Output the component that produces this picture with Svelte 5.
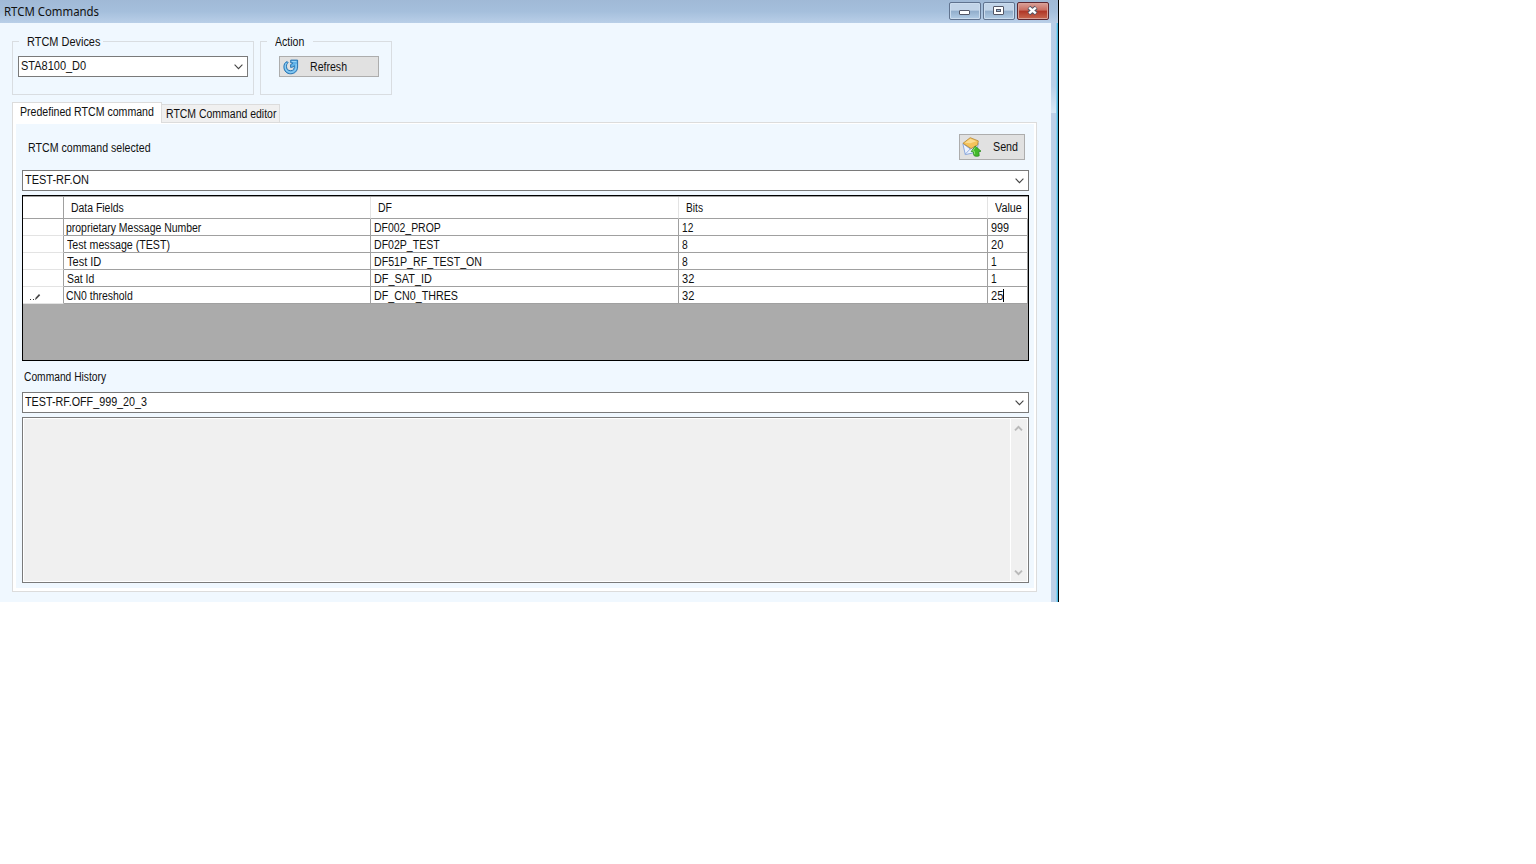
<script>
  const rows = [
    { c: [['proprietary Message Number', 135, 2], ['DF002_PROP', 67, 3], ['12', 11, 3], ['999', 18, 3]] },
    { c: [['Test message (TEST)', 103, 3], ['DF02P_TEST', 66, 3], ['8', 6, 3], ['20', 12, 3]] },
    { c: [['Test ID', 34, 3], ['DF51P_RF_TEST_ON', 108, 3], ['8', 6, 3], ['1', 6, 3]] },
    { c: [['Sat Id', 27, 3], ['DF_SAT_ID', 58, 3], ['32', 12, 3], ['1', 6, 3]] },
    { c: [['CN0 threshold', 67, 2], ['DF_CN0_THRES', 84, 3], ['32', 12, 3], ['25', 12, 3]], editing: true }
  ];
  const headers = [['Data Fields', 53], ['DF', 14], ['Bits', 17], ['Value', 27]];

  // Condense a label horizontally to its design width.
  function fit(node, width) {
    const natural = node.offsetWidth;
    node.style.transform = `scaleX(${width / natural})`;
    node.style.marginRight = `${width - natural}px`;
  }
</script>

{#snippet label(text, width)}<span class="label" use:fit={width}>{text}</span>{/snippet}

{#snippet combo(text, width)}
  <div class="combo">
    {@render label(text, width)}
    <svg class="chevron" width="9" height="6" viewBox="0 0 9 6"><path d="M.6.7 4.5 4.6 8.4.7" fill="none" stroke="#444" stroke-width="1.1" /></svg>
  </div>
{/snippet}

<div class="window">
  <header>
    <div class="title">{@render label('RTCM Commands', 95)}</div>
    <div class="controls">
      <button class="ctl" aria-label="Minimize"><svg width="32" height="18"><rect x="10.5" y="8.5" width="10" height="4" rx=".5" fill="#fff" stroke="#535666" /></svg></button>
      <button class="ctl" aria-label="Maximize"><svg width="32" height="18"><rect x="10.5" y="4.5" width="10" height="8" rx=".5" fill="#fff" stroke="#535666" /><rect x="13.5" y="7.5" width="4" height="2" fill="#9db9d6" stroke="#535666" /></svg></button>
      <button class="ctl close" aria-label="Close"><svg width="32" height="18"><path d="m11.8 5.3 7.4 6.4m0-6.4-7.4 6.4" stroke="#535666" stroke-width="4.4" /><path d="m12.2 5.6 6.6 5.8m0-5.8-6.6 5.8" stroke="#fff" stroke-width="2.4" /></svg></button>
    </div>
  </header>
  <div class="main">
    <div class="content">
      <div class="groups">
        <section class="group devices">
          <div class="legend">{@render label('RTCM Devices', 73)}</div>
          {@render combo('STA8100_D0', 65)}
        </section>
        <section class="group action">
          <div class="legend">{@render label('Action', 29)}</div>
          <button class="btn refresh">
            <svg width="16" height="16" viewBox="0 0 16 16"><path d="M4.2 2.6C1.8 3.4.8 5.4.9 8.2c.2 4 3 6.6 6.7 6.6 4.2 0 7-2.9 7-6.8V1.1H7.7v2.7l2.1.1c-.5 1-1.2 1.5-2.2 1.7v2.8c1.6.1 2.8-.6 3.7-1.7.2 3.1-1 5-3.6 5-2.8 0-4.3-1.8-4.2-4.4 0-1.9.5-2.9 1.7-3.6z" fill="#62b3e8" stroke="#1f6cac" stroke-width=".9" stroke-linejoin="round" /><path d="M3.5 4.1C1.2 6.3 1.7 13.2 7.7 13.3c4.1 0 5.9-2.9 5.4-8.3M8.8 2.5h4.5" fill="none" stroke="#9fd6f6" stroke-width=".9" /></svg>
            {@render label('Refresh', 37)}
          </button>
        </section>
      </div>
      <nav>
        <div class="tab active">{@render label('Predefined RTCM command', 134)}</div>
        <div class="tab">{@render label('RTCM Command editor', 110)}</div>
      </nav>
      <div class="panel">
        <div class="page">
          <div class="top">
            {@render label('RTCM command selected', 123)}
            <button class="btn send">
              <svg width="20" height="20" viewBox="0 0 20 20"><path d="m.8 6.5 7.8 5.7 7.7-6-1.5 9-11.5 2.4z" fill="#edf3ff" stroke="#8ca9dd" /><path d="M1 6.3 8.2.7l8.1 3.2-.7 4-6.5 3.7z" fill="#f5c35b" stroke="#b58632" stroke-width=".8" /><path d="m2.8 5.8 5.6-4 6 2.4-6 2.1z" fill="#fbdc91" /><path d="m3.2 17.2 5.3-5.5" stroke="#6e91d3" stroke-width=".7" /><path d="m13.3 9.1 5.7 5.1-2.2.5.4 4.1c-1.8.8-4.3.7-5.4-.5l-.3-3.3-2.3-.5z" fill="#43b92a" stroke="#2b8c20" stroke-width=".8" stroke-linejoin="round" /><path d="m13.2 10.4-2.5 3.5 1.6.4.4 3" fill="none" stroke="#8be570" /></svg>
              {@render label('Send', 25)}
            </button>
          </div>
          {@render combo('TEST-RF.ON', 64)}
          <div class="grid">
            <div class="row head">
              <div class="cell"></div>
              {#each headers as [text, width]}<div class="cell">{@render label(text, width)}</div>{/each}
            </div>
            {#each rows as row}
              <div class="row">
                <div class="cell mark">
                  {#if row.editing}<svg width="11" height="8" viewBox="0 0 11 8"><path d="M0 6h1v1H0zM3 6h1v1H3z" fill="#333" /><path d="m5 7 .6-2.2L9 1l1.2 1.2-3.6 3.9z" fill="#444" /></svg>{/if}
                </div>
                {#each row.c as [text, width, pad], i}
                  <div class="cell" class:nudge={pad === 2}>{@render label(text, width)}{#if row.editing && i === 3}<i class="caret"></i>{/if}</div>
                {/each}
              </div>
            {/each}
          </div>
          <div class="history">{@render label('Command History', 82)}</div>
          {@render combo('TEST-RF.OFF_999_20_3', 122)}
          <div class="output">
            <div class="scroll">
              <svg width="9" height="7" viewBox="0 0 9 7"><path d="M1 5.3 4.5 1.8 8 5.3" fill="none" stroke="#b9b9b9" stroke-width="1.9" /></svg>
              <svg width="9" height="7" viewBox="0 0 9 7"><path d="M1 1.7 4.5 5.2 8 1.7" fill="none" stroke="#b9b9b9" stroke-width="1.9" /></svg>
            </div>
          </div>
        </div>
      </div>
    </div>
    <div class="edge"></div>
  </div>
</div>

<style>
  :global(body) { background: #fff; }
  * { box-sizing: border-box; }
  .window { width: 1059px; height: 602px; font: 12px/14px "Liberation Sans", Arial, sans-serif; color: #111; background: #f0f8ff; display: flex; flex-direction: column; overflow: hidden; }
  .label { display: inline-block; flex: none; white-space: pre; transform-origin: 0 50%; }
  header { height: 23px; flex: none; display: flex; justify-content: space-between; background: linear-gradient(#a0b9d6, #a5bfdc 50%, #b9cfe8); border-right: 1px solid #000; }
  .title { padding: 4px 0 0 4px; font: 12px/16px "Noto Sans", "Open Sans", sans-serif; }
  .controls { display: flex; gap: 2px; padding: 2px 9px 0 0; }
  .ctl { display: block; width: 32px; height: 18px; padding: 0; border: 1px solid #60738f; border-radius: 2px; background: linear-gradient(#c2d4e8 0 45%, #91adcb 50%, #b2cce5); box-shadow: inset 0 0 0 1px #cbdcee; overflow: hidden; }
  .ctl svg { display: block; margin: -1px; }
  .close { border-color: #5c2730; background: linear-gradient(#d9a199 0, #c96d60 45%, #af3526 50%, #c86850); box-shadow: inset 0 0 0 1px #d9a097; }
  .main { display: flex; flex: 1; }
  .content { flex: 1; padding: 14px 13px 0 12px; display: flex; flex-direction: column; }
  .edge { width: 8px; background: linear-gradient(90deg, #bdd0e8 0 5px, #8fcdea 5px 6px, #4bb9e3 6px 7px, #000 7px); position: relative; }
  .edge::before { content: ""; position: absolute; left: 0; top: 0; width: 5px; height: 90px; background: linear-gradient(#b8cee8, #b9d0e9 70%, #d9e9f7); }
  .groups { display: flex; gap: 6px; padding-top: 4px; }
  .group { height: 54px; border: 1px solid #d9dde1; padding: 0 5px; }
  .devices { width: 242px; }
  .action { width: 132px; }
  .legend { width: max-content; height: 14px; margin: -7px 0 0 1px; padding: 0 3px 0 8px; background: #f0f8ff; }
  .action .legend { margin-left: 1px; padding-right: 9px; }
  .combo { height: 21px; flex: none; background: #fff; border: 1px solid #7a7a7a; display: flex; justify-content: space-between; padding: 2px 4px 0 2px; }
  .group .combo { margin-top: 7px; }
  .chevron { margin-top: 5px; }
  .btn { display: flex; align-items: center; padding: 0; border: 1px solid #adadad; background: #e1e1e1; color: #111; font: inherit; }
  .refresh { width: 100px; height: 21px; margin: 7px 0 0 13px; padding-left: 3px; gap: 11px; }
  nav { display: flex; align-items: flex-end; height: 27px; }
  .tab { height: 18px; padding: 2px 3px 0 4px; border: 1px solid #dcdcdc; border-bottom: 0; border-left: 0; background: #f0f0f0; }
  .tab.active { width: 150px; height: 21px; margin-bottom: -1px; padding: 2px 0 0 7px; border-left: 1px solid #dcdcdc; background: #fff; z-index: 1; }
  .panel { width: 1025px; height: 470px; border: 1px solid #dcdcdc; background: #fff; padding: 1px 2px 3px 3px; }
  .page { height: 100%; background: #f0f8ff; padding: 10px 5px 0 6px; display: flex; flex-direction: column; width: 1018px; }
  .top { display: flex; justify-content: space-between; height: 36px; padding: 0 4px 0 6px; }
  .top > :global(.label) { margin-top: 7px; }
  .send { width: 66px; height: 26px; padding-left: 2px; gap: 11px; }
  .grid { height: 166px; flex: none; margin-top: 4px; border: 1px solid #000; background: #ababab; }
  .row { display: grid; grid-template-columns: 41px 307px 308px 309px 40px; height: 17px; background: #fff; }
  .cell { border-right: 1px solid #a0a0a0; border-bottom: 1px solid #a0a0a0; padding: 2px 0 0 3px; display: flex; overflow: hidden; }
  .nudge { padding-left: 2px; }
  .head { height: 23px; border-top: 1px solid #a0a0a0; }
  .head .cell { border-right-color: #e3e3e3; padding: 4px 0 0 7px; }
  .head .cell:first-child { border-right-color: #a0a0a0; }
  .mark { border-bottom-color: #e3e3e3; padding: 6px 0 0 7px; }
  .caret { width: 1px; height: 13px; background: #000; }
  .history { height: 31px; flex: none; padding: 9px 0 0 2px; }
  .output { height: 166px; flex: none; margin-top: 4px; border: 1px solid #7a7a7a; padding: 1px; background: #fff; }
  .scroll { height: 100%; background: linear-gradient(#fff, #fff) 986px 0 / 1px 100% no-repeat #f0f0f0; display: flex; flex-direction: column; justify-content: space-between; align-items: flex-end; padding: 6px 4px 5px 0; }
</style>
